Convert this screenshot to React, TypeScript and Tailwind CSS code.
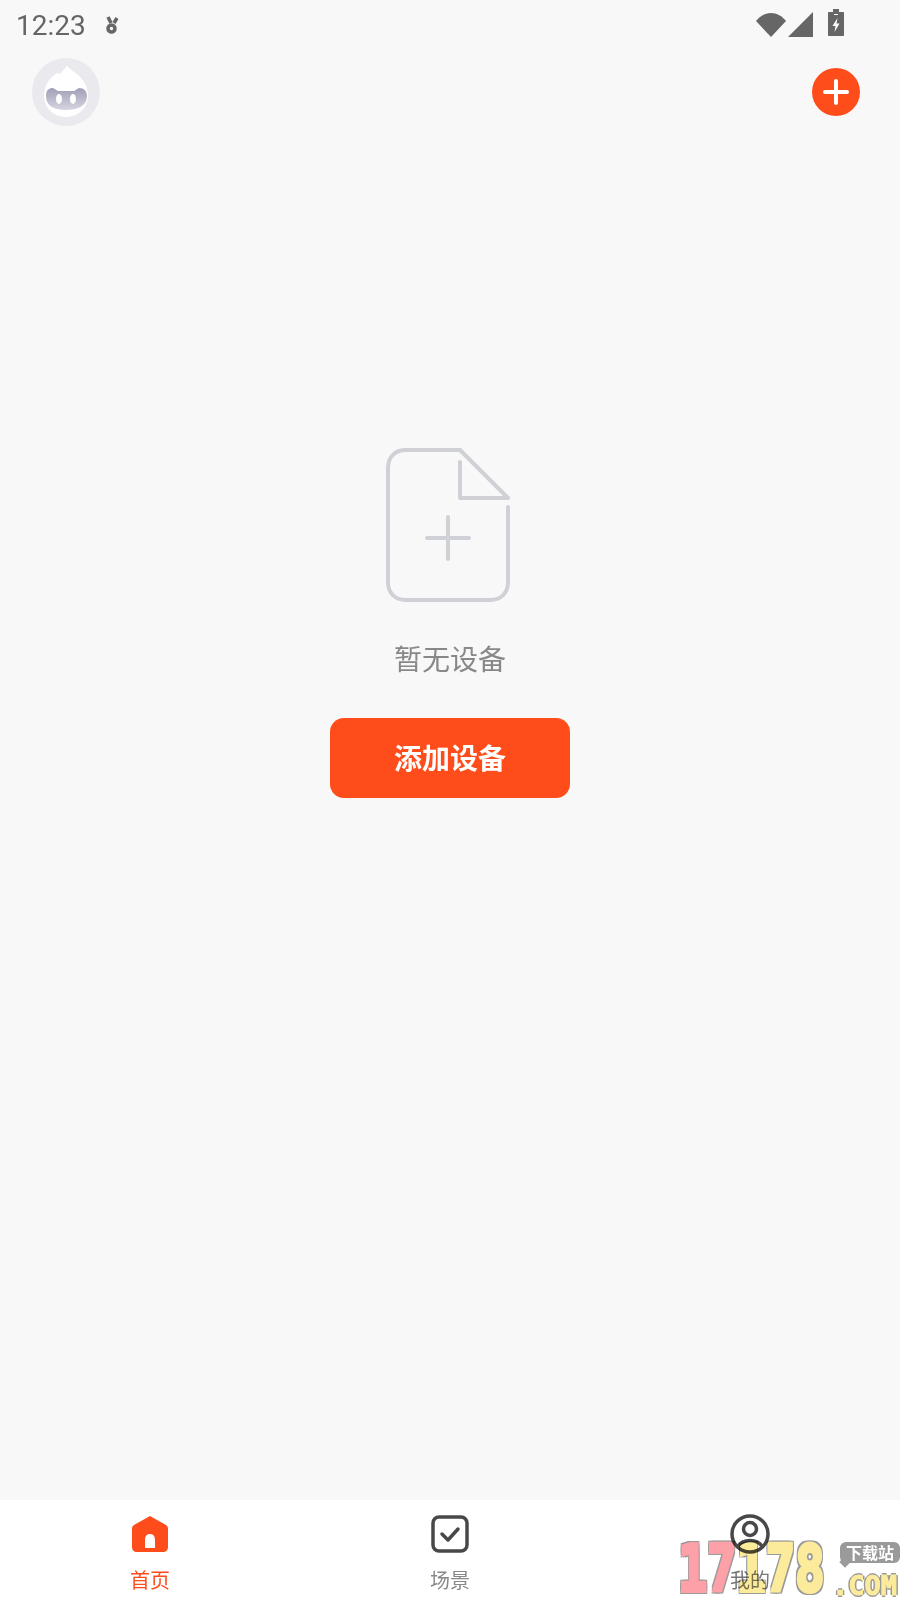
import React from "react";

const CJK = "font-['Roboto','Noto_Sans_CJK_SC',sans-serif]";

function Avatar() {
  return (
    <svg width="68" height="68" viewBox="0 0 68 68">
      <defs>
        <linearGradient id="fc" x1="0" y1="0" x2="0" y2="1">
          <stop offset="0" stopColor="#a09eb6" />
          <stop offset="1" stopColor="#d6d5e0" />
        </linearGradient>
      </defs>
      <circle cx="34" cy="34" r="34" fill="#e9e9ee" />
      <path d="M12 38C12 28 17 20 25 15L28 16L35 8L42 14C50 19 56 27 56 38C56 50 46 59 34 59C22 59 12 50 12 38Z" fill="#fff" />
      <path d="M14 38C14 32 17 30 21 30L26 33H42L47 30C52 30 55 33 55 38C55 47 47 52 34 52C21 52 14 47 14 38Z" fill="url(#fc)" />
      <ellipse cx="27" cy="41" rx="3" ry="5" fill="#fff" />
      <ellipse cx="41" cy="41" rx="3" ry="5" fill="#fff" />
    </svg>
  );
}

function StatusIcons() {
  return (
    <div className="flex items-center">
      <svg width="32" height="28" viewBox="0 0 32 28">
        <path d="M1 11C5 6 10 3 16 3C22 3 27 6 31 11L16 27Z" fill="#666" />
      </svg>
      <svg width="26" height="26" viewBox="0 0 26 26" className="ml-[1px] mt-[1px]">
        <path d="M25 0V25H0Z" fill="#666" />
      </svg>
      <svg width="16" height="28" viewBox="0 0 16 28" className="ml-[14px] mt-[-2px]">
        <path d="M5 0H11V3H15C15.600 3 16 3.400 16 4V26C16 26.600 15.600 27 15 27H1C.4 27 0 26.600 0 26V4C0 3.400 .4 3 1 3H5Z" fill="#666" />
        <path d="M9.500 9L4.500 17H7.500L6.500 23L11.500 14.500H8.500Z" fill="#fff" />
        <path d="M6 5.500H10" stroke="#fff" strokeWidth="1" />
      </svg>
    </div>
  );
}

function EmptyIcon() {
  return (
    <svg width="124" height="154" viewBox="0 0 124 154" fill="none" stroke="#cfd1d6" strokeWidth="4" strokeLinecap="round" strokeLinejoin="round" className="mr-[4px]">
      <path d="M74 2H20C9 2 2 9 2 20V134C2 145 9 152 20 152H104C115 152 122 145 122 134V59" />
      <path d="M74 2L122 50H74V14" />
      <path d="M62 69V111M41 90H83" />
    </svg>
  );
}

function Watermark() {
  return (
    <div className="absolute left-[678px] bottom-0 z-10 h-[62px] w-[222px] pointer-events-none mix-blend-multiply">
      <div className="absolute left-0 top-0 origin-left scale-x-[0.76] whitespace-nowrap font-['DejaVu_Sans_Mono','Liberation_Mono',monospace] text-[64px] font-bold leading-[62px] [-webkit-text-stroke:4px_currentColor] [text-shadow:3px_0_0_#9a9a9a,-3px_0_0_#9a9a9a,0_3px_0_#9a9a9a,0_-3px_0_#9a9a9a,3px_3px_0_#9a9a9a,-3px_3px_0_#9a9a9a,3px_-3px_0_#9a9a9a,-3px_-3px_0_#9a9a9a]">
        <span className="text-[#fda0a8]">17</span>
        <span className="text-[#fdeb9c]">178</span>
      </div>
      <div className="absolute left-[162px] top-[4px] h-[21px] w-[60px] rounded-[6px] bg-[#9a9a9a] text-center text-[16px] font-bold leading-[21px] text-white font-['Noto_Sans_CJK_SC',sans-serif]">
        下载站
        <span className="absolute bottom-[-3px] left-[1px] h-[8px] w-[8px] rotate-45 bg-[#9a9a9a]" />
      </div>
      <div className="absolute left-[154px] top-[34px] whitespace-nowrap font-['DejaVu_Sans_Mono','Liberation_Mono',monospace] text-[27px] font-bold leading-[28px] text-[#fdeb9c] [-webkit-text-stroke:1px_#fdeb9c] [text-shadow:2px_0_0_#9a9a9a,-2px_0_0_#9a9a9a,0_2px_0_#9a9a9a,0_-2px_0_#9a9a9a]">
        .COM
      </div>
    </div>
  );
}

export default function App() {
  return (
    <div className={`relative flex h-[1600px] w-[900px] flex-col overflow-hidden bg-[#f8f8f8] ${CJK}`}>
      <div className="flex h-[48px] items-center justify-between pl-[16px] pr-[56px]">
        <div className="mt-[3px] flex items-center gap-[19px]">
          <span className="text-[28px] leading-[48px] text-[#666] font-['Roboto',sans-serif]">12:23</span>
          <svg width="14" height="20" viewBox="0 0 14 20" fill="none" stroke="#666" strokeWidth="3.500">
            <path d="M3 1L6 7M12 2L9 7" />
            <circle cx="6.500" cy="12.500" r="3.500" />
          </svg>
        </div>
        <StatusIcons />
      </div>

      <div className="flex h-[92px] items-start justify-between pl-[32px] pr-[40px] pt-[10px]">
        <Avatar />
        <div className="mt-[10px] flex h-[48px] w-[48px] items-center justify-center rounded-full bg-[#ff4c1b]">
          <svg width="26" height="26" viewBox="0 0 26 26" stroke="#fff" strokeWidth="4" strokeLinecap="round">
            <path d="M13 2V24M2 13H24" />
          </svg>
        </div>
      </div>

      <div className="flex flex-1 flex-col items-center pt-[308px]">
        <EmptyIcon />
        <div className="mt-[39px] text-[28px] leading-[40px] text-[#888]">暂无设备</div>
        <button className="mt-[37px] h-[80px] w-[240px] rounded-[14px] bg-[#ff4c1b] pt-[4px] text-[28px] font-bold text-white">
          添加设备
        </button>
      </div>

      <nav className="grid h-[100px] grid-cols-3 bg-white">
        <div className="flex flex-col items-center pt-[15px]">
          <svg width="38" height="38" viewBox="0 0 38 38">
            <path d="M19 1L35 10C36.500 11 37 12 37 14V32C37 35 35 37 32 37H6C3 37 1 35 1 32V14C1 12 1.500 11 3 10ZM14 33H24V25C24 21 22 19 19 19C16 19 14 21 14 25Z" fill="#ff4c1b" fillRule="evenodd" />
          </svg>
          <span className="mt-[14px] text-[20px] leading-[28px] text-[#ff4c1b]">首页</span>
        </div>
        <div className="flex flex-col items-center pt-[15px]">
          <svg width="38" height="38" viewBox="0 0 38 38" fill="none" stroke="#484848" strokeWidth="3.500" strokeLinecap="round" strokeLinejoin="round">
            <rect x="2" y="2" width="34" height="34" rx="6" />
            <path d="M11 19L17 25L27 14" />
          </svg>
          <span className="mt-[14px] text-[20px] leading-[28px] text-[#888]">场景</span>
        </div>
        <div className="flex flex-col items-center pt-[15px]">
          <svg width="40" height="38" viewBox="0 0 40 38" fill="none" stroke="#484848" strokeWidth="3.500" className="overflow-visible">
            <circle cx="20" cy="19" r="18" />
            <circle cx="20" cy="14" r="6.500" />
            <path d="M8 31C11 27 15 25.500 20 25.500C25 25.500 29 27 32 31" />
          </svg>
          <span className="mt-[14px] text-[20px] leading-[28px] text-[#777]">我的</span>
        </div>
      </nav>
      <Watermark />
    </div>
  );
}
